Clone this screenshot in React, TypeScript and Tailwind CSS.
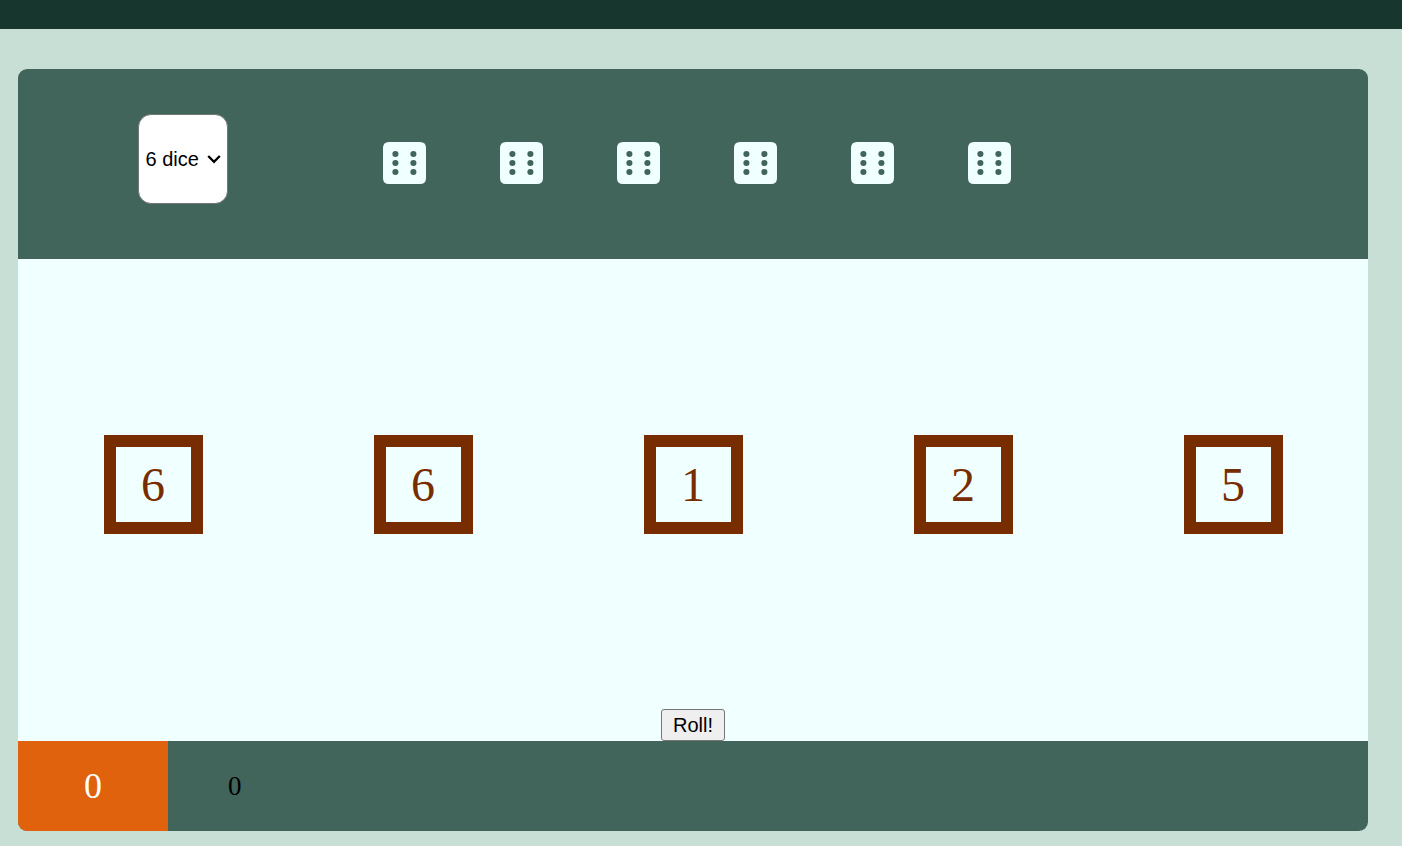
import { useState } from "react";

const DICE_OPTIONS = [1, 2, 3, 4, 5, 6];

function DieIcon() {
  return (
    <svg className="h-[42px] w-[43px] shrink-0" viewBox="0 0 43 42">
      <path
        fill="#f0ffff"
        d="M6 0H37Q43 0 43 6V36Q43 42 37 42H6Q0 42 0 36V6Q0 0 6 0Z"
      />
      {[12, 21, 30].map((y) => (
        <g key={y} fill="#42655b">
          <circle cx="12.4" cy={y} r="3.05" />
          <circle cx="30.4" cy={y} r="3.05" />
        </g>
      ))}
    </svg>
  );
}

export default function App() {
  const [count, setCount] = useState(6);
  const [tiles, setTiles] = useState([6, 6, 1, 2, 5]);

  const roll = () =>
    setTiles(tiles.map(() => 1 + Math.floor(Math.random() * 6)));

  return (
    <div className="flex h-screen flex-col overflow-hidden bg-[#c8dfd5] font-['Liberation_Serif',serif]">
      <header className="h-[29px] shrink-0 bg-[#17362e]" />
      <main className="mt-10 ml-[18px] flex h-[762px] w-[1350px] shrink-0 flex-col overflow-hidden rounded-[9px] bg-[#f0ffff]">
        <section className="flex h-[190px] shrink-0 bg-[#42655b]">
          <label className="mt-[45px] ml-[120px] grid h-[90px] w-[90px] shrink-0 items-center rounded-[13px] border border-[#767676] bg-white">
            <select
              value={count}
              onChange={(e) => setCount(Number(e.target.value))}
              className="col-start-1 row-start-1 h-full w-full appearance-none bg-transparent pl-[6.5px] font-['Liberation_Sans',sans-serif] text-[20px] text-black outline-none"
            >
              {DICE_OPTIONS.map((n) => (
                <option key={n} value={n}>
                  {n} dice
                </option>
              ))}
            </select>
            <svg
              className="pointer-events-none col-start-1 row-start-1 mr-[6px] h-[10px] w-[14px] justify-self-end"
              viewBox="0 0 14 10"
              fill="none"
              stroke="#000"
              strokeWidth="2.3"
            >
              <path d="M1.2 2L7 7.8L12.8 2" />
            </svg>
          </label>
          <div className="mt-[73px] ml-[155px] flex h-[42px] gap-[74px]">
            {Array.from({ length: count }, (_, i) => (
              <DieIcon key={i} />
            ))}
          </div>
        </section>
        <section className="flex min-h-0 flex-1 flex-col items-center">
          <div className="grid w-full flex-1 grid-cols-5 place-items-center">
            {tiles.map((n, i) => (
              <div
                key={i}
                className="flex h-[99px] w-[99px] items-center justify-center border-[12px] border-[#772d00] pt-[1px] text-[48px] leading-none text-[#772d00]"
              >
                {n}
              </div>
            ))}
          </div>
          <button
            onClick={roll}
            className="h-8 w-16 rounded-[3px] border border-[#767676] bg-[#efefef] font-['Liberation_Sans',sans-serif] text-[20px] leading-none text-black"
          >
            Roll!
          </button>
        </section>
        <footer className="flex h-[90px] shrink-0 items-center bg-[#42655b]">
          <div className="flex h-full w-[150px] items-center justify-center bg-[#e0620d] text-[36px] text-white">
            0
          </div>
          <div className="ml-[60px] text-[27px] text-black">0</div>
        </footer>
      </main>
    </div>
  );
}
